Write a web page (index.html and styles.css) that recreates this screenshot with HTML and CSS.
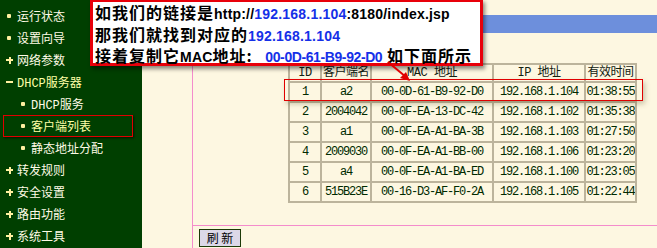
FILE: index.html
```html
<!doctype html>
<html>
  <head>
    <link rel="stylesheet" href="styles.css">
  </head>
  <body>
    <div class="page">
      <div class="sidebar">
        <div class="item"><span class="mk"><i class="dot"></i></span>运行状态</div>
        <div class="item"><span class="mk"><i class="dot"></i></span>设置向导</div>
        <div class="item"><span class="mk"><i class="plus"></i></span>网络参数</div>
        <div class="item open"><span class="mk"><i class="minus"></i></span>DHCP服务器</div>
        <div class="item sub"><span class="mk"><i class="dot"></i></span>DHCP服务</div>
        <div class="item sub current"><span class="mk"><i class="dot"></i></span>客户端列表</div>
        <div class="item sub"><span class="mk"><i class="dot"></i></span>静态地址分配</div>
        <div class="item"><span class="mk"><i class="plus"></i></span>转发规则</div>
        <div class="item"><span class="mk"><i class="plus"></i></span>安全设置</div>
        <div class="item"><span class="mk"><i class="plus"></i></span>路由功能</div>
        <div class="item"><span class="mk"><i class="plus"></i></span>系统工具</div>
      </div>

      <div class="gutter"></div>

      <div class="main">
        <div class="banner"></div>
        <div class="content">
          <div class="table-wrap">
            <table class="clients">
              <colgroup>
                <col style="width: 32px">
                <col style="width: 50px">
                <col style="width: 122px">
                <col style="width: 92px">
                <col style="width: 51px">
              </colgroup>
              <tr class="head">
                <td>ID</td><td>客户端名</td><td>MAC 地址</td><td>IP 地址</td><td>有效时间</td>
              </tr>
              <tr><td>1</td><td>a2</td><td>00-0D-61-B9-92-D0</td><td>192.168.1.104</td><td>01:38:55</td></tr>
              <tr><td>2</td><td>2004042</td><td>00-0F-EA-13-DC-42</td><td>192.168.1.102</td><td>01:35:38</td></tr>
              <tr><td>3</td><td>a1</td><td>00-0F-EA-A1-BA-3B</td><td>192.168.1.103</td><td>01:27:50</td></tr>
              <tr><td>4</td><td>2009030</td><td>00-0F-EA-A1-BB-00</td><td>192.168.1.106</td><td>01:23:20</td></tr>
              <tr><td>5</td><td>a4</td><td>00-0F-EA-A1-BA-ED</td><td>192.168.1.100</td><td>01:23:05</td></tr>
              <tr><td>6</td><td>515B23E</td><td>00-16-D3-AF-F0-2A</td><td>192.168.1.105</td><td>01:22:44</td></tr>
            </table>
            <div class="row-mark"></div>
          </div>
        </div>
        <div class="footer">
          <button class="refresh">刷 新</button>
        </div>
      </div>

      <div class="callout">
        <div>如我们的链接是<span class="lat">http://<b class="ip">192.168.1.104</b>:8180/index.jsp</span></div>
        <div>那我们就找到对应的<span class="lat ip">192.168.1.104</span></div>
        <div>接着复制它<span class="lat">MAC</span>地址: <span class="lat ip mac">00-0D-61-B9-92-D0</span> 如下面所示</div>
      </div>

      <svg class="arrow" width="30" height="26" viewBox="0 0 30 26">
        <line x1="3" y1="3" x2="21" y2="18" stroke="#e00000" stroke-width="2" />
        <polygon points="25,22 15,19 21,13" fill="#e00000" />
      </svg>
    </div>
  </body>
</html>
```

FILE: styles.css
```css
body {
  margin: 0;
  background-color: #fdf7e1;
  font-family: "Liberation Mono", "Noto Sans CJK SC", monospace;
}

.page {
  position: relative;
  display: flex;
  width: 657px;
  height: 248px;
  overflow: hidden;
}

/* left menu */

.sidebar {
  width: 142px;
  padding-top: 5px;
  background-color: #003f00;
  box-sizing: border-box;
}

.item {
  position: relative;
  display: flex;
  align-items: center;
  height: 22px;
  padding-left: 6px;
  font-size: 12px;
  color: #fffbe6;
}

.item.sub {
  padding-left: 20px;
}

.item.open,
.item.current {
  color: #ffffa8;
}

.item.current::after {
  content: "";
  position: absolute;
  left: 3px;
  right: 9px;
  top: 0;
  bottom: 0;
  border: 1px solid #e00000;
  box-shadow: 1px 1px 2px rgba(0, 0, 0, 0.6);
}

.mk {
  display: flex;
  align-items: center;
  width: 11px;
  height: 10px;
}

.dot {
  width: 4px;
  height: 4px;
  margin-left: 1px;
  border-radius: 1px;
  background-color: #fff0a0;
}

.plus {
  width: 7px;
  height: 7px;
  background:
    linear-gradient(#fff0a0, #fff0a0) center / 7px 2px no-repeat,
    linear-gradient(#fff0a0, #fff0a0) center / 2px 7px no-repeat;
}

.minus {
  width: 7px;
  height: 2px;
  background-color: #fff0a0;
}

.gutter {
  width: 50px;
}

/* right frame */

.main {
  flex: 1;
  display: flex;
  flex-direction: column;
  border-left: 1px solid #f48ccc;
}

.banner {
  height: 18px;
  margin-top: 15px;
  background-color: #6d8fdc;
}

.content {
  flex: 1;
  padding: 30px 0 0 95px;
}

.table-wrap {
  position: relative;
  width: 347px;
}

.clients {
  width: 347px;
  table-layout: fixed;
  border-collapse: collapse;
  border: 2px solid #bcb49c;
  color: #002a00;
  font-size: 12px;
  letter-spacing: -1.2px;
}

.clients td {
  height: 18px;
  padding: 0;
  border: 2px solid #bcb49c;
  text-align: center;
  line-height: 18px;
  white-space: nowrap;
  overflow: hidden;
}

.clients .head td {
  height: 16px;
  line-height: 16px;
  font-size: 12px;
  color: #102010;
  letter-spacing: -0.5px;
}

.row-mark {
  position: absolute;
  left: -4px;
  right: -8px;
  top: 16px;
  height: 20px;
  border: 1px solid #e00000;
  box-shadow: 2px 3px 5px rgba(90, 80, 40, 0.3);
}

.footer {
  height: 23px;
  padding: 3px 0 0 6px;
  border-top: 1px solid #f48ccc;
  box-sizing: border-box;
}

.refresh {
  width: 42px;
  height: 18px;
  padding: 0;
  background-color: #dcd8e8;
  border: 1px solid #1c3a08;
  font-family: "Noto Sans CJK SC", sans-serif;
  font-size: 12px;
  line-height: 14px;
  color: #000;
}

/* annotation */

.callout {
  position: absolute;
  left: 90px;
  top: -1px;
  width: 393px;
  height: 67px;
  padding: 1px 0 0 2px;
  background-color: #fff;
  border: 3px solid #e8000a;
  box-sizing: border-box;
  box-shadow: 2px 3px 4px rgba(0, 0, 0, 0.45);
  font-family: "Noto Sans CJK SC", sans-serif;
  font-size: 16px;
  font-weight: bold;
  line-height: 19.5px;
  letter-spacing: 1px;
  color: #000;
  white-space: nowrap;
}

.lat {
  font-family: "Liberation Sans", sans-serif;
  font-size: 14px;
  letter-spacing: 0.2px;
}

.callout .mac {
  margin-left: 8px;
  letter-spacing: -0.4px;
}

.ip {
  color: #1530e8;
}

.callout b {
  font-weight: bold;
}

.arrow {
  position: absolute;
  left: 385px;
  top: 59px;
}
```
